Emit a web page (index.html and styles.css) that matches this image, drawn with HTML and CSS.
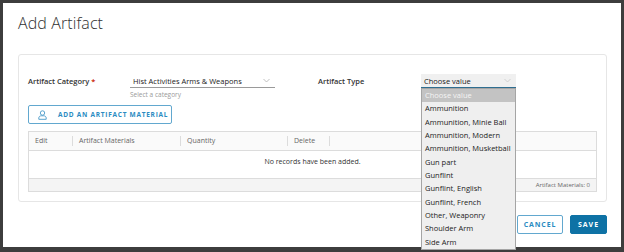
FILE: index.html
```html
<!DOCTYPE html>
<html>
  <head>
    <meta charset="utf-8">
    <title>Add Artifact</title>
    <link rel="stylesheet" href="styles.css">
  </head>
  <body>
    <div class="modal">
      <h3 class="modal-title">Add Artifact</h3>
      <div class="card">
        <div class="form-row">
          <label class="field-label">Artifact Category <span class="req">*</span></label>
          <div class="field">
            <div class="select cat-select">
              <span>Hist Activities Arms &amp; Weapons</span>
              <svg class="chev" width="7" height="5" viewBox="0 0 7 5"><path d="M0.5 1 L3.5 4 L6.5 1" fill="none" stroke="#b0b0b0" stroke-width="0.8"/></svg>
            </div>
            <div class="helper">Select a category</div>
          </div>
          <label class="field-label type-label">Artifact Type</label>
          <div class="field type-field">
            <div class="select type-select">
              <span>Choose value</span>
              <svg class="chev" width="7" height="5" viewBox="0 0 7 5"><path d="M0.5 1 L3.5 4 L6.5 1" fill="none" stroke="#c8c8c8" stroke-width="0.8"/></svg>
            </div>
            <ul class="options">
              <li class="selected">Choose value</li>
              <li>Ammunition</li>
              <li>Ammunition, Minie Ball</li>
              <li>Ammunition, Modern</li>
              <li>Ammunition, Musketball</li>
              <li>Gun part</li>
              <li>Gunflint</li>
              <li>Gunflint, English</li>
              <li>Gunflint, French</li>
              <li>Other, Weaponry</li>
              <li>Shoulder Arm</li>
              <li>Side Arm</li>
            </ul>
          </div>
        </div>
        <button class="btn-outline add-btn">
          <svg class="user-icon" width="9" height="10" viewBox="0 0 9 10"><circle cx="4.5" cy="3" r="2.2" fill="none" stroke="#4a9ac8" stroke-width="0.9"/><path d="M0.8 9.3 V8 C0.8 6.6 2 5.8 3.2 5.8 H5.8 C7 5.8 8.2 6.6 8.2 8 V9.3 Z" fill="none" stroke="#4a9ac8" stroke-width="0.9"/></svg>
          <span>ADD AN ARTIFACT MATERIAL</span>
        </button>
        <div class="grid">
          <div class="grid-head">
            <div class="col c-edit">Edit</div>
            <div class="col c-mat">Artifact Materials</div>
            <div class="col c-qty">Quantity</div>
            <div class="col c-del">Delete</div>
            <div class="col c-rest"></div>
          </div>
          <div class="grid-body">No records have been added.</div>
          <div class="grid-foot">Artifact Materials: 0</div>
        </div>
      </div>
      <div class="modal-footer">
        <button class="btn-outline cancel-btn">CANCEL</button>
        <button class="btn-primary">SAVE</button>
      </div>
    </div>
  </body>
</html>
```

FILE: styles.css
```css
html, body {
  margin: 0;
  padding: 0;
  height: 100%;
}
body {
  background: #3d3d3d;
  font-family: "Open Sans", "DejaVu Sans", sans-serif;
  color: #333;
  padding: 3px 0 0 3px;
  box-sizing: border-box;
  overflow: hidden;
}
.modal {
  width: 618px;
  height: 244px;
  background: #fff;
  box-sizing: border-box;
  padding: 0 14px 0 15px;
  display: flex;
  flex-direction: column;
}
.modal-title {
  margin: 0;
  padding-top: 9px;
  height: 51px;
  flex-shrink: 0;
  box-sizing: border-box;
  font-size: 16px;
  font-weight: 300;
  color: #313131;
  letter-spacing: 0.1px;
}
.card {
  width: 589px;
  height: 148px;
  flex-shrink: 0;
  box-sizing: border-box;
  border: 1px solid #e6e6e6;
  border-radius: 3px;
  padding: 19px 9px 0 9px;
}
.form-row {
  display: flex;
  height: 30px;
}
.field-label {
  width: 102px;
  font-size: 7.5px;
  font-weight: 600;
  color: #333;
  padding-top: 2px;
}
.req {
  color: #c92100;
}
.field {
  position: relative;
}
.cat-select {
  width: 145px;
  margin-right: 43px;
}
.select {
  height: 14px;
  box-sizing: border-box;
  border-bottom: 1px solid #9a9a9a;
  display: flex;
  align-items: center;
  justify-content: space-between;
  padding: 0 5px 0 3px;
  font-size: 7.5px;
  color: #222;
}
.helper {
  font-size: 6.5px;
  color: #9a9a9a;
  padding-top: 2px;
}
.type-label {
  width: 103px;
}
.type-select {
  width: 95px;
  background: #f0f0f0;
  border-bottom: 1px solid #2f6e90;
}
.options {
  position: absolute;
  top: 14px;
  left: 0;
  width: 95px;
  margin: 0;
  padding: 0;
  list-style: none;
  background: #efefef;
  border: 1px solid #a5a5a5;
  box-sizing: border-box;
  z-index: 5;
}
.options li {
  height: 13.33px;
  line-height: 13.33px;
  padding-left: 3px;
  font-size: 7.5px;
  color: #222;
  white-space: nowrap;
}
.options li.selected {
  background: #c3c3c3;
  color: #f4f4f4;
}
.btn-outline {
  background: #fff;
  border: 1px solid #62a8cf;
  border-radius: 2px;
  color: #2a8bc2;
  font-family: inherit;
  font-weight: 700;
  font-size: 7px;
  letter-spacing: 0.9px;
  white-space: nowrap;
  cursor: pointer;
}
.add-btn {
  display: flex;
  align-items: center;
  gap: 11px;
  width: 144px;
  height: 19px;
  margin-top: 1px;
  padding: 0 0 0 9px;
  font-size: 6.5px;
  letter-spacing: 0.75px;
}
.user-icon {
  flex-shrink: 0;
}
.grid {
  margin-top: 7px;
  width: 569px;
  border: 1px solid #dcdcdc;
  box-sizing: border-box;
}
.grid-head {
  display: flex;
  height: 18px;
  background: #fafafa;
  border-bottom: 1px solid #dcdcdc;
  align-items: center;
}
.col {
  font-size: 7px;
  color: #666;
  padding-left: 6px;
  box-sizing: border-box;
  height: 10px;
  line-height: 10px;
  border-left: 1px solid #dcdcdc;
}
.c-edit {
  width: 43px;
  border-left: none;
}
.c-mat {
  width: 108px;
}
.c-qty {
  width: 107px;
}
.c-del {
  width: 42px;
}
.c-rest {
  flex: 1;
}
.grid-body {
  height: 27px;
  display: flex;
  align-items: center;
  justify-content: center;
  font-size: 7px;
  color: #333;
  padding-bottom: 6px;
  box-sizing: border-box;
}
.grid-foot {
  height: 12px;
  background: #f4f4f4;
  border-top: 1px solid #dcdcdc;
  font-size: 6px;
  color: #666;
  text-align: right;
  line-height: 12px;
  padding-right: 6px;
}
.modal-footer {
  display: flex;
  justify-content: flex-end;
  gap: 7px;
  padding-top: 13px;
}
.cancel-btn {
  width: 46px;
  height: 19px;
  padding: 0;
}
.btn-primary {
  width: 37px;
  height: 19px;
  padding: 0;
  background: #0e72a5;
  border: 1px solid #0e72a5;
  border-radius: 2px;
  color: #fff;
  font-family: inherit;
  font-weight: 700;
  font-size: 7px;
  letter-spacing: 1px;
}
```
